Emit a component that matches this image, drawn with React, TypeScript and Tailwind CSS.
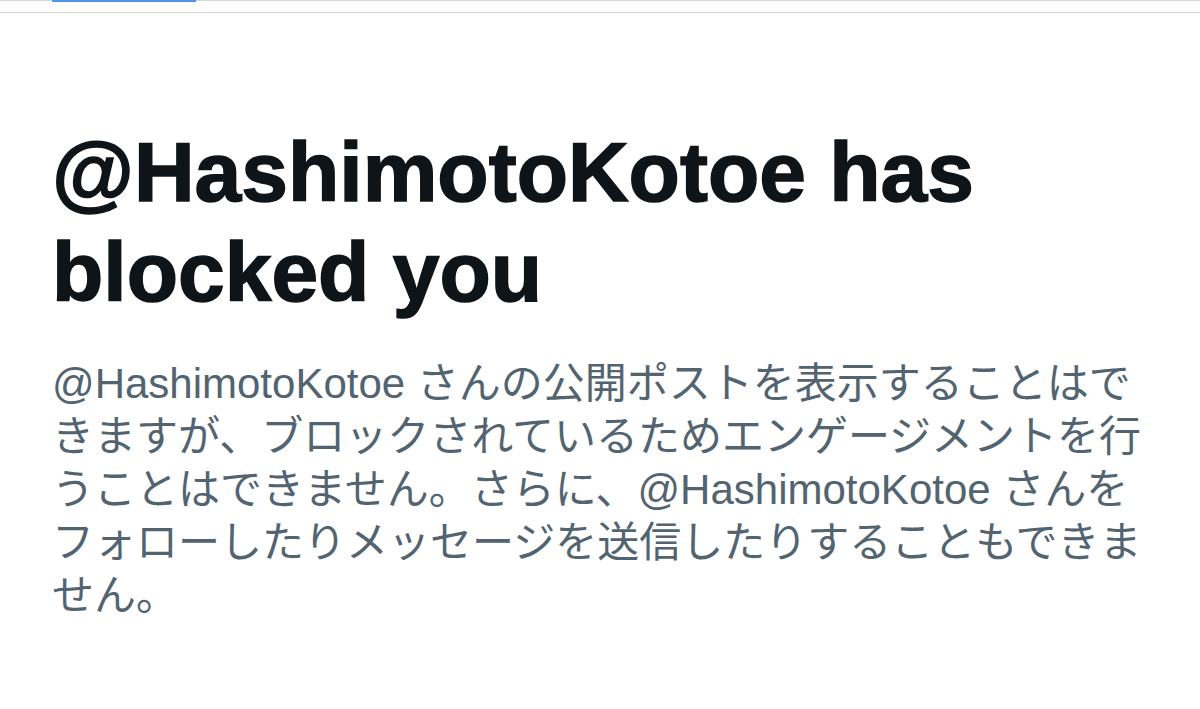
import React from 'react';

const handle = '@HashimotoKotoe';

export default function App() {
  return (
    <main className="w-[1200px] h-[709px] bg-white overflow-hidden" style={{ fontFamily: '"Liberation Sans", "Noto Sans CJK JP", sans-serif' }}>
      {/* tab strip edge */}
      <div className="h-[13px] border-t border-b border-[#d4d9dd] bg-[#fefefe]">
        <div className="ml-[52px] -mt-px w-[144px] h-[2px] bg-[#4f97e3]" />
      </div>

      <section className="pl-[52px] pt-[109px]">
        <h1 className="text-[84px] leading-[100px] font-bold text-[#0f1419] w-[1000px] [-webkit-text-stroke:1.5px_#0f1419]">
          {handle} has blocked you
        </h1>
        <p className="mt-[35px] w-[1100px] text-[42px] leading-[53px] text-[#536471]">
          {handle} さんの公開ポストを表示することはできますが、ブロックされているためエンゲージメントを行うことはできません。さらに、{handle} さんをフォローしたりメッセージを送信したりすることもできません。
        </p>
      </section>
    </main>
  );
}
